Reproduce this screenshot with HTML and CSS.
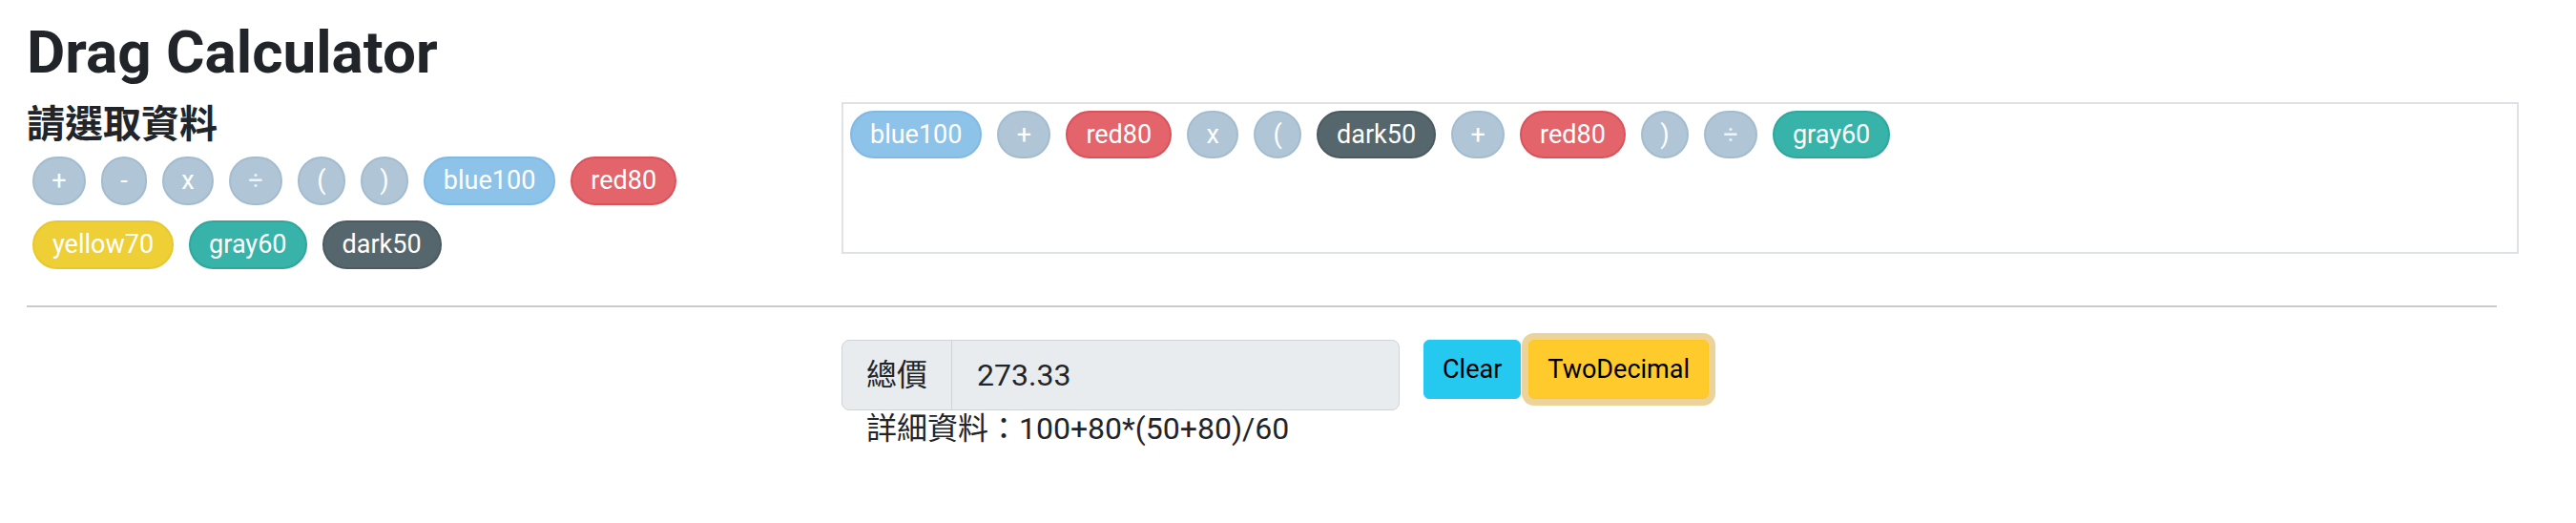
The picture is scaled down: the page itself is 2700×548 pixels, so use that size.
FILE: index.html
```html
<!DOCTYPE html>
<html lang="zh-Hant">
<head>
<meta charset="utf-8">
<title>Drag Calculator</title>
<link rel="stylesheet" href="styles.css">
</head>
<body>
<div class="page">
  <h1 class="title">Drag Calculator</h1>
  <div class="top-row">
    <div class="left-col">
      <h4 class="subtitle">請選取資料</h4>
      <div class="pills">
        <span class="pill op">+</span>
        <span class="pill op">-</span>
        <span class="pill op">x</span>
        <span class="pill op div">÷</span>
        <span class="pill op">(</span>
        <span class="pill op">)</span>
        <span class="pill blue">blue100</span>
        <span class="pill red">red80</span>
        <span class="pill yellow">yellow70</span>
        <span class="pill teal">gray60</span>
        <span class="pill dark">dark50</span>
      </div>
    </div>
    <div class="drop-box">
      <span class="pill blue">blue100</span>
      <span class="pill op">+</span>
      <span class="pill red">red80</span>
      <span class="pill op">x</span>
      <span class="pill op">(</span>
      <span class="pill dark">dark50</span>
      <span class="pill op">+</span>
      <span class="pill red">red80</span>
      <span class="pill op">)</span>
      <span class="pill op div">÷</span>
      <span class="pill teal">gray60</span>
    </div>
  </div>
  <hr class="divider">
  <div class="bottom-row">
    <div class="calc">
      <div class="input-group">
        <span class="addon">總價</span>
        <span class="value">273.33</span>
      </div>
      <div class="detail">詳細資料：100+80*(50+80)/60</div>
    </div>
    <div class="buttons">
      <button class="btn btn-clear">Clear</button>
      <button class="btn btn-two">TwoDecimal</button>
    </div>
  </div>
</div>
</body>
</html>
```

FILE: styles.css
```css
html, body {
  margin: 0;
  padding: 0;
  background: #ffffff;
}

body {
  font-family: Roboto, "Noto Sans CJK TC", sans-serif;
  color: #212529;
}

.page {
  padding: 18px 60px 0 28px;
}

.title {
  margin: 0 0 15px 0;
  font-size: 62px;
  font-weight: 700;
  line-height: 1.2;
}

.top-row {
  display: flex;
  align-items: flex-start;
}

.left-col {
  width: 854px;
  flex: none;
  box-sizing: border-box;
  padding-right: 30px;
}

.subtitle {
  margin: 0 0 9px 0;
  font-size: 40px;
  font-weight: 700;
  line-height: 1.2;
}

.pills {
  display: flex;
  flex-wrap: wrap;
  gap: 16px;
  padding-left: 6px;
}

.pill {
  display: inline-block;
  font-size: 27px;
  line-height: 41px;
  padding: 3px 19px;
  border: 2px solid;
  border-radius: 30px;
  color: #ffffff;
  white-space: nowrap;
}

.pill.op {
  background: #b0c6d6;
  border-color: #a4bccf;
  padding: 3px 18.3px;
}

.pill.div {
  color: #eef3f7;
}

.pill.blue {
  background: #8ec3e9;
  border-color: #7fb9e6;
}

.pill.red {
  background: #e3646b;
  border-color: #dc525b;
}

.pill.yellow {
  background: #efcf36;
  border-color: #e9c82d;
}

.pill.teal {
  background: #37b3a9;
  border-color: #2fa79d;
}

.pill.dark {
  background: #56666d;
  border-color: #4c5b62;
}

.drop-box {
  flex: 1;
  height: 159px;
  box-sizing: border-box;
  border: 2px solid #dee2e6;
  padding: 7px;
  display: flex;
  flex-wrap: wrap;
  align-content: flex-start;
  gap: 16px;
}

.drop-box .pill {
  line-height: 40px;
}

.divider {
  margin: 38px 23px 0 0;
  border: 0;
  border-top: 2px solid #c9cacb;
  height: 0;
}

.bottom-row {
  display: flex;
  align-items: flex-start;
  padding-left: 854px;
  margin-top: 34px;
}

.calc {
  width: 585px;
  flex: none;
}

.input-group {
  display: flex;
  border: 1px solid #ced4da;
  border-radius: 8px;
  background: #e9ecef;
  font-size: 32px;
  line-height: 48px;
}

.addon {
  padding: 12px 25px;
  border-right: 1px solid #ced4da;
}

.value {
  padding: 12px 26px;
}

.detail {
  font-size: 32px;
  line-height: 1.2;
  padding-left: 26px;
}

.buttons {
  display: flex;
  gap: 8px;
  margin-left: 25px;
  align-items: flex-start;
}

.btn {
  font-family: Roboto, sans-serif;
  font-size: 27px;
  line-height: 40px;
  padding: 10px 19px;
  border: 1px solid;
  border-radius: 6px;
  color: #000000;
  cursor: pointer;
}

.btn-clear {
  background: #25c9f0;
  border-color: #25c9f0;
}

.btn-two {
  background: #ffca2c;
  border-color: #ffc720;
  box-shadow: 0 0 0 7px #ecd399;
}
```
